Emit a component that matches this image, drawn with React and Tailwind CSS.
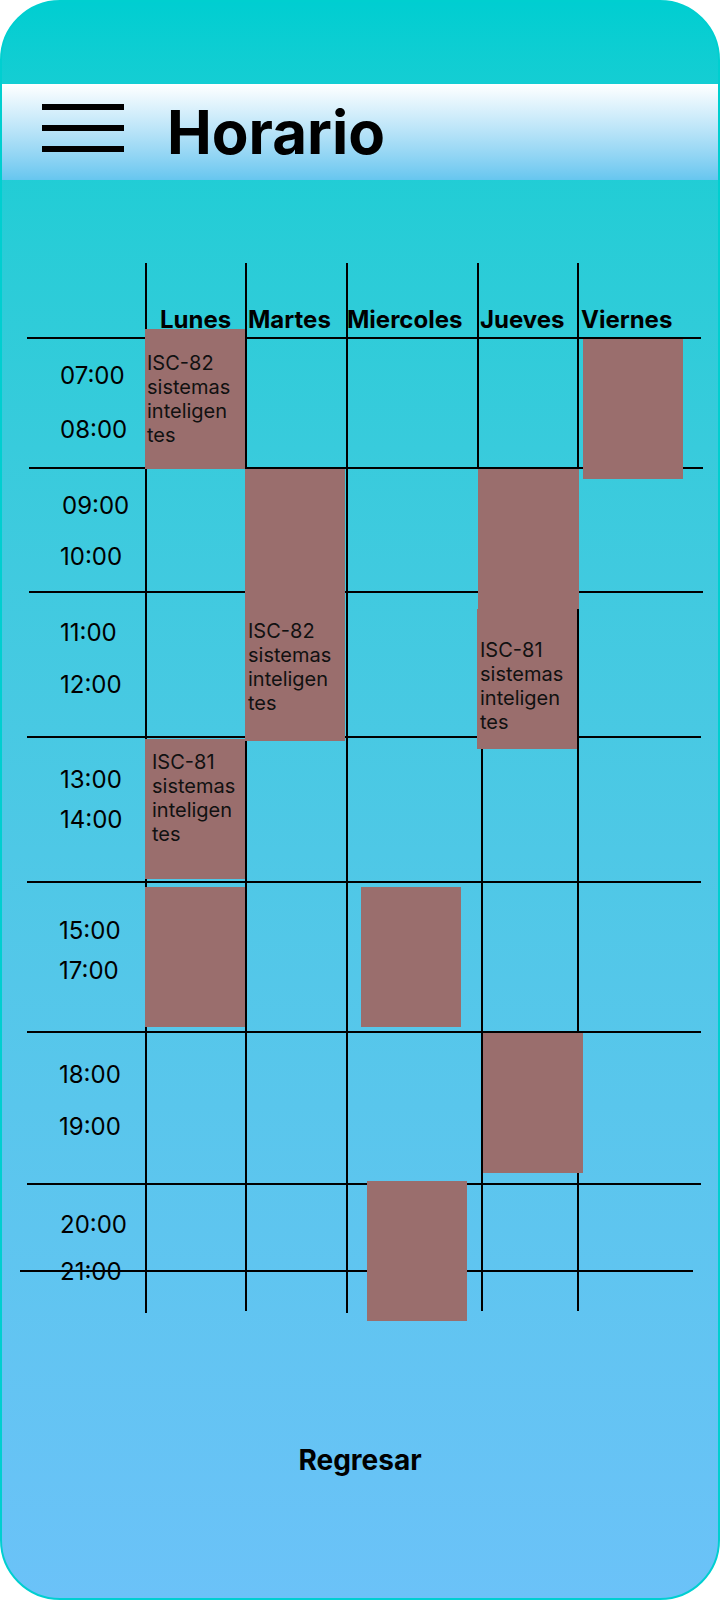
import React from 'react'

/**
 * Horario
 *
 * Weekly timetable mock-up. The grid is a hand-drawn canvas (lines and
 * blocks don't line up exactly), so it is laid out on a relative board.
 */

const vLines = [
    'left-[143px] top-[83px] h-[1050px]', // Lunes
    'left-[243px] top-[83px] h-[1048px]', // Martes
    'left-[344px] top-[83px] h-[1050px]', // Miercoles
    'left-[475px] top-[83px] h-[206px]', // Jueves arriba
    'left-[479px] top-[569px] h-[562px]', // Jueves abajo
    'left-[575px] top-[83px] h-[1048px]', // Viernes
]

const hLines = [
    'top-[157px] left-[25px] w-[674px]',
    'top-[287px] left-[27px] w-[674px]',
    'top-[411px] left-[27px] w-[674px]',
    'top-[556px] left-[25px] w-[674px]',
    'top-[701px] left-[25px] w-[674px]',
    'top-[851px] left-[25px] w-[674px]',
    'top-[1003px] left-[25px] w-[674px]',
    'top-[1090px] left-[18px] w-[673px]',
]

const days = [
    { name: 'Lunes', pos: 'left-[158px]' },
    { name: 'Martes', pos: 'left-[246px]' },
    { name: 'Miercoles', pos: 'left-[345px]' },
    { name: 'Jueves', pos: 'left-[478px]' },
    { name: 'Viernes', pos: 'left-[579px]' },
]

const hours = [
    { t: '07:00', pos: 'left-[58px] top-[184px]' },
    { t: '08:00', pos: 'left-[58px] top-[238px]' },
    { t: '09:00', pos: 'left-[60px] top-[314px]' },
    { t: '10:00', pos: 'left-[58px] top-[365px]' },
    { t: '11:00', pos: 'left-[58px] top-[441px]' },
    { t: '12:00', pos: 'left-[58px] top-[493px]' },
    { t: '13:00', pos: 'left-[58px] top-[588px]' },
    { t: '14:00', pos: 'left-[58px] top-[628px]' },
    { t: '15:00', pos: 'left-[57px] top-[739px]' },
    { t: '17:00', pos: 'left-[57px] top-[779px]' },
    { t: '18:00', pos: 'left-[57px] top-[883px]' },
    { t: '19:00', pos: 'left-[57px] top-[935px]' },
    { t: '20:00', pos: 'left-[58px] top-[1033px]' },
    { t: '21:00', pos: 'left-[58px] top-[1080px]' },
]

const blocks = [
    { pos: 'left-[143px] top-[149px] w-[100px] h-[140px]', pad: 'pt-[22px] pl-[2px]', code: 'ISC-82' },
    { pos: 'left-[581px] top-[159px] w-[100px] h-[140px]' },
    { pos: 'left-[243px] top-[289px] w-[100px] h-[272px]', pad: 'pt-[150px] pl-[3px]', code: 'ISC-82' },
    { pos: 'left-[476px] top-[289px] w-[101px] h-[140px]' },
    { pos: 'left-[475px] top-[429px] w-[100px] h-[140px]', pad: 'pt-[29px] pl-[3px]', code: 'ISC-81' },
    { pos: 'left-[143px] top-[559px] w-[100px] h-[140px]', pad: 'pt-[11px] pl-[7px]', code: 'ISC-81' },
    { pos: 'left-[143px] top-[707px] w-[100px] h-[140px]' },
    { pos: 'left-[359px] top-[707px] w-[100px] h-[140px]' },
    { pos: 'left-[481px] top-[853px] w-[100px] h-[140px]' },
    { pos: 'left-[365px] top-[1001px] w-[100px] h-[140px]' },
]

function Block({ pos, pad, code }) {
    return (
        <div className={`absolute bg-[#9a6e6d] ${pos} ${pad || ''}`}>
            {code && (
                <div className="text-[20px] leading-[24px] text-[#111] whitespace-nowrap">
                    <div>{code}</div>
                    <div>sistemas</div>
                    <div>inteligen</div>
                    <div>tes</div>
                </div>
            )}
        </div>
    )
}

export default function App() {
    return (
        <div className="w-[720px] h-[1600px] bg-white font-[family-name:Inter,sans-serif] text-black">
            <div className="w-[720px] h-[1600px] rounded-[60px] border-2 border-[#00cfd0] bg-gradient-to-b from-[#00ced1] to-[#6bc2f8] overflow-hidden flex flex-col pt-[82px]">
                {/* barra superior */}
                <div className="h-[96px] bg-gradient-to-b from-white to-[#66c6ef] flex items-center pl-[40px] gap-[43px]">
                    <div className="flex flex-col gap-[15px] mb-[8px]">
                        <span className="block w-[82px] h-[6px] bg-black" />
                        <span className="block w-[82px] h-[6px] bg-black" />
                        <span className="block w-[82px] h-[6px] bg-black" />
                    </div>
                    <h1 className="text-[60px] leading-none font-bold">Horario</h1>
                </div>

                {/* tablero del horario */}
                <div className="relative h-[1150px]">
                    {vLines.map((c, i) => (
                        <div key={'v' + i} className={`absolute w-[2px] bg-black ${c}`} />
                    ))}
                    {hLines.map((c, i) => (
                        <div key={'h' + i} className={`absolute h-[2px] bg-black ${c}`} />
                    ))}
                    {days.map((d) => (
                        <span key={d.name} className={`absolute top-[128px] text-[24px] leading-none font-bold ${d.pos}`}>
                            {d.name}
                        </span>
                    ))}
                    {hours.map((h) => (
                        <span key={h.t} className={`absolute text-[24px] leading-none ${h.pos}`}>
                            {h.t}
                        </span>
                    ))}
                    {blocks.map((b, i) => (
                        <Block key={'b' + i} {...b} />
                    ))}
                </div>

                <div className="mt-[116px] text-center text-[28px] leading-none font-bold">Regresar</div>
            </div>
        </div>
    )
}
